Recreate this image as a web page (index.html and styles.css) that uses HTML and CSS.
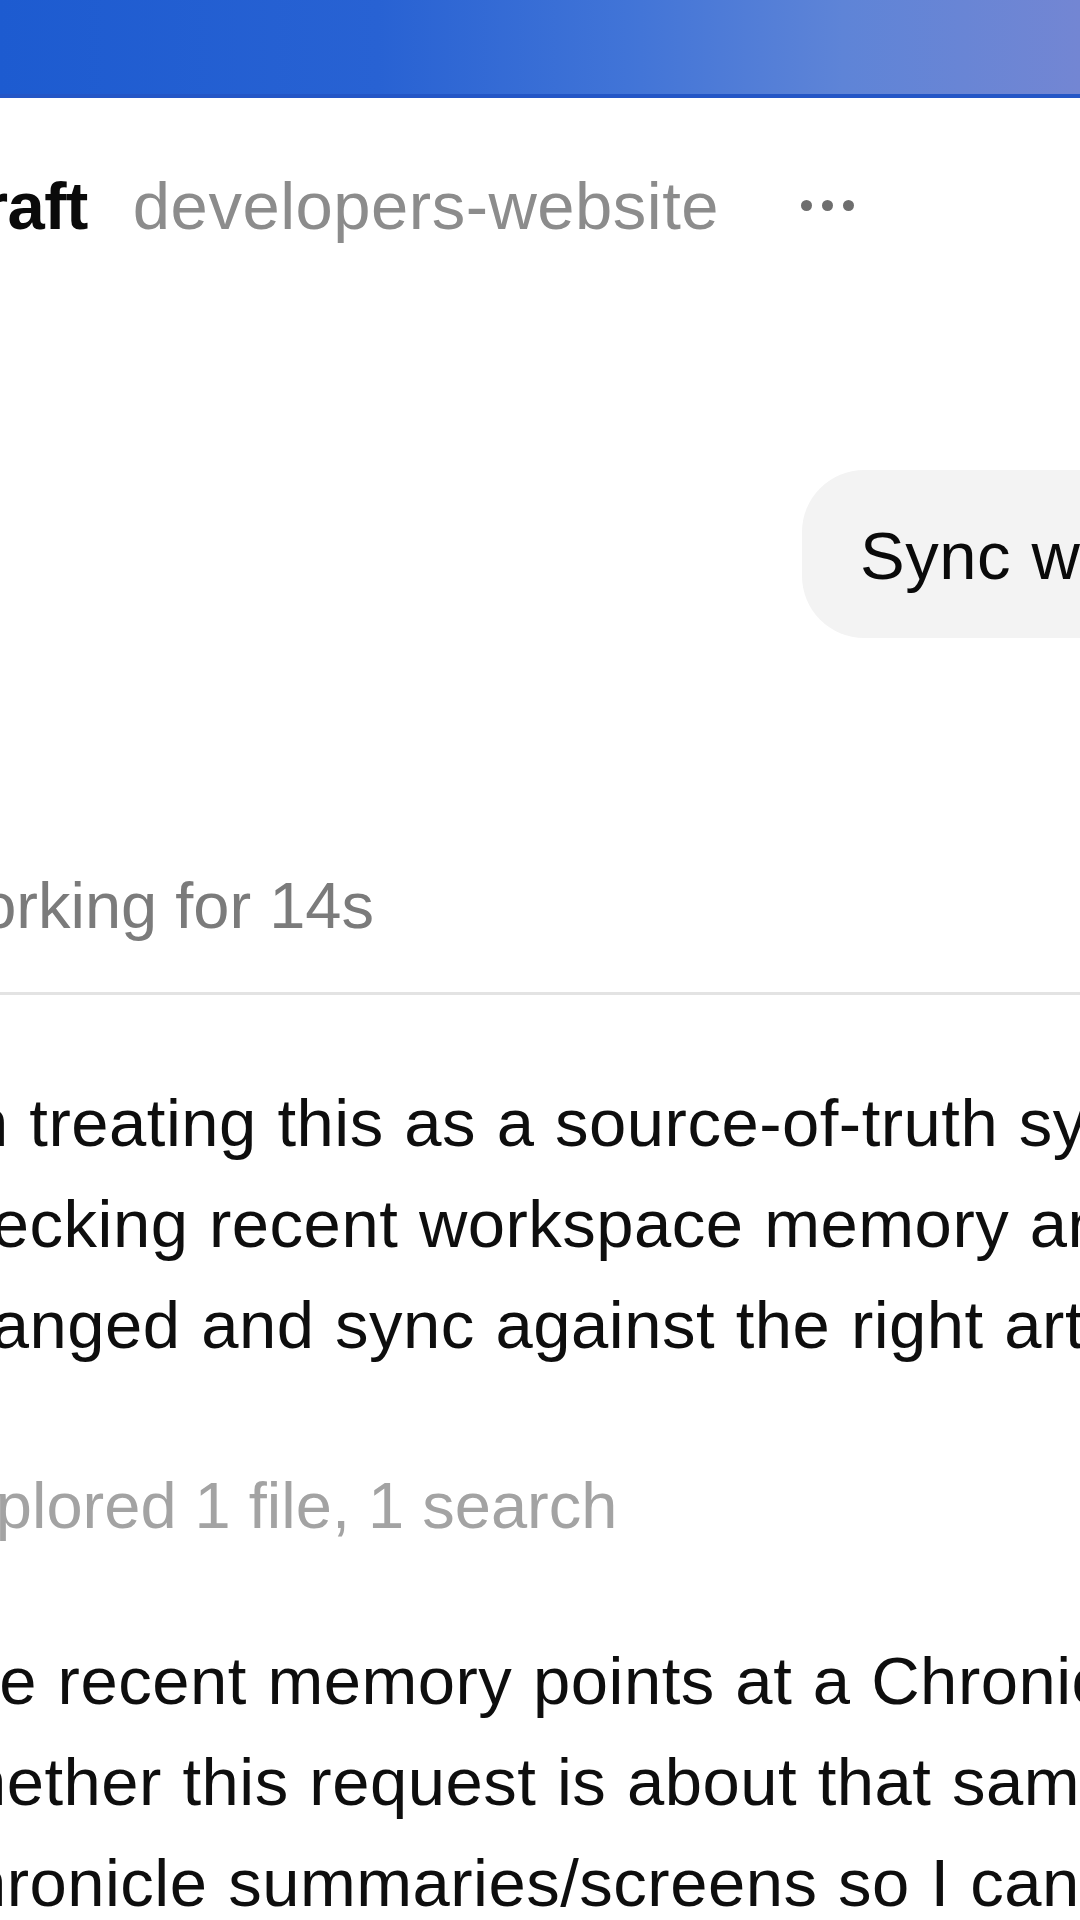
FILE: index.html
```html
<!DOCTYPE html>
<html lang="en">
<head>
<meta charset="utf-8">
<title>developers-website</title>
<link rel="stylesheet" href="styles.css">
</head>
<body>
<div class="topbar"></div>
<main class="column">
  <header class="thread-head">
    <span class="thread-title">Draft</span>
    <span class="thread-repo">developers-website</span>
    <span class="more" aria-label="More"><i></i><i></i><i></i></span>
  </header>

  <div class="user-row">
    <div class="bubble">Sync with the latest Chronicle launch materials</div>
  </div>

  <div class="status">Working for 14s</div>
  <hr class="divider">

  <p class="msg">I'm treating this as a source-of-truth sync, so I'm first<br>checking recent workspace memory and the repo to see what's<br>changed and sync against the right artifacts.</p>

  <div class="explored">Explored 1 file, 1 search</div>

  <p class="msg msg-2">The recent memory points at a Chronicle launch draft, so I'm checking<br>whether this request is about that same launch and pulling the<br>Chronicle summaries/screens so I can sync the site.</p>
</main>
</body>
</html>
```

FILE: styles.css
```css
* { box-sizing: border-box; }

html, body {
  margin: 0;
  padding: 0;
  background: #ffffff;
  width: 1080px;
  height: 1920px;
  overflow: hidden;
}

body {
  font-family: "Liberation Sans", Arial, "Helvetica Neue", sans-serif;
  font-size: 67px;
  line-height: 101px;
  letter-spacing: 0.5px;
  word-spacing: 1.5px;
  color: #0e0e0e;
}

.topbar {
  height: 98px;
  background: linear-gradient(90deg, #1d5bd0 0%, #2862d3 35%, #4174d7 58%, #5e84d7 78%, #7386d3 100%);
  border-bottom: 4px solid #2456c6;
}

.column {
  margin-left: -80px;
  width: 1300px;
  white-space: nowrap;
}

.thread-head {
  display: flex;
  align-items: center;
  margin-top: 57px;
  padding-left: 14px;
}

.thread-title {
  font-weight: 700;
  color: #0a0a0a;
  letter-spacing: -0.5px;
}

.thread-repo {
  margin-left: 45px;
  color: #8c8c8c;
}

.more {
  display: flex;
  gap: 10px;
  margin-left: 82px;
}

.more i {
  display: block;
  width: 11px;
  height: 11px;
  border-radius: 50%;
  background: #6e6e6e;
}

.user-row {
  margin-top: 214px;
  padding-left: 882px;
}

.bubble {
  display: inline-block;
  background: #f3f3f3;
  border-radius: 62px;
  padding: 35px 60px 32px 58px;
  color: #0a0a0a;
}

.status {
  margin-top: 217px;
  font-size: 65px;
  letter-spacing: 0;
  word-spacing: 0;
  color: #7b7b7b;
}

.divider {
  margin: 36px 0 0 0;
  border: 0;
  height: 3px;
  background: #e3e3e3;
}

.msg {
  margin: 77px 0 0 0;
}

.explored {
  margin-top: 80px;
  font-size: 65px;
  letter-spacing: 0;
  word-spacing: 0;
  color: #a3a3a3;
}

.msg-2 {
  margin-top: 74px;
}
```
